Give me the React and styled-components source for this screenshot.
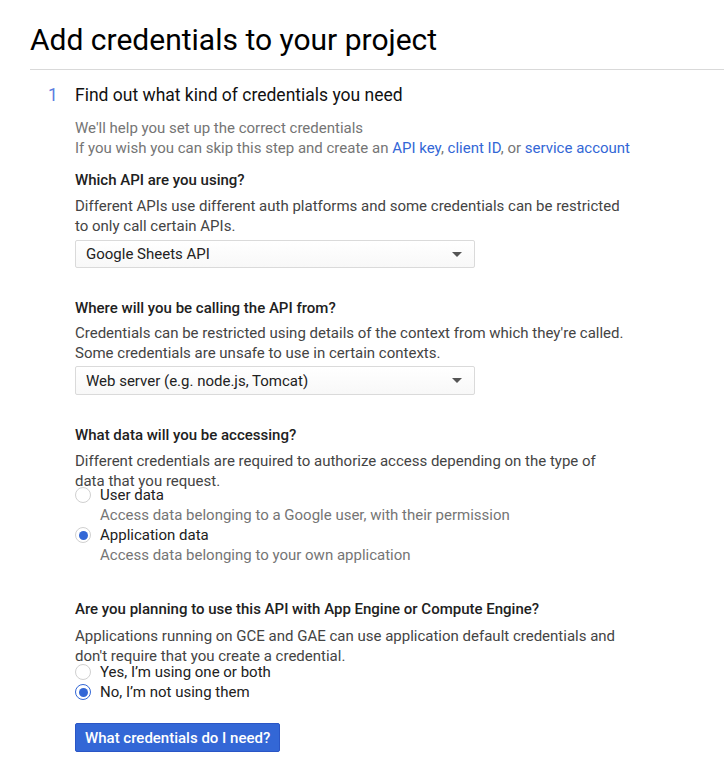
import { styled, createGlobalStyle } from "styled-components";

const GlobalStyle = createGlobalStyle`
    body{
        margin:0;
        background:#fff;
        font-family:Roboto, "Liberation Sans", Arial, sans-serif;
        color:#212121;
    }
`

const Page = styled.div`
    padding-left:30px;
    padding-top:22px;
`
const Title = styled.h1`
    margin:0;
    font-size:30px;
    line-height:36px;
    font-weight:400;
    color:#000;
`
const Divider = styled.hr`
    margin:11px 0 0 0;
    border:none;
    border-top:1px solid #d9d9d9;
`
const Step = styled.div`
    display:flex;
    margin-top:13px;
`
const StepNumber = styled.div`
    width:45px;
    padding-left:18px;
    box-sizing:border-box;
    font-size:17.5px;
    line-height:24px;
    color:#5a7de0;
`
const StepBody = styled.div`
    display:flex;
    flex-direction:column;
    width:600px;
`
const StepTitle = styled.h2`
    margin:0;
    font-size:17.5px;
    line-height:24px;
    font-weight:400;
    color:#111;
`
const Intro = styled.p`
    margin:11px 0 0 0;
    font-size:15px;
    line-height:20px;
    color:#757575;
`
const Link = styled.a`
    color:#3367d6;
    text-decoration:none;
`
const Question = styled.h3`
    margin:${p => p.$gap}px 0 0 0;
    font-size:15px;
    line-height:20px;
    font-weight:500;
    color:#212121;
`
const Description = styled.p`
    margin:${p => p.$gap ?? 6}px 0 0 0;
    font-size:15px;
    line-height:20px;
    color:#444;
`
const SelectBox = styled.div`
    display:flex;
    align-items:center;
    justify-content:space-between;
    width:400px;
    height:${p => p.$h}px;
    margin-top:${p => p.$gap}px;
    padding:0 12px 0 10px;
    box-sizing:border-box;
    border:1px solid #dadada;
    border-radius:2px;
    background:linear-gradient(#fff, #f8f8f8);
    font-size:15px;
    color:#222;
`
const Arrow = styled.span`
    width:0;
    height:0;
    border-left:5px solid transparent;
    border-right:5px solid transparent;
    border-top:5px solid #555;
`
const RadioGroup = styled.div`
    display:flex;
    flex-direction:column;
    margin-top:${p => p.$gap}px;
`
const RadioRow = styled.label`
    display:flex;
    align-items:center;
    gap:9px;
    font-size:15px;
    line-height:20px;
    color:#212121;
`
const Circle = styled.span`
    width:16px;
    height:16px;
    box-sizing:border-box;
    border-radius:50%;
    border:1px solid ${p => p.$focus ? "#3367d6" : "#d0d0d0"};
    background:#fff;
    display:flex;
    align-items:center;
    justify-content:center;
    &::after{
        content:"";
        display:${p => p.$checked ? "block" : "none"};
        width:9px;
        height:9px;
        border-radius:50%;
        background:#3367d6;
    }
`
const RadioHint = styled.div`
    padding-left:25px;
    font-size:15px;
    line-height:20px;
    color:#757575;
`
const Button = styled.button`
    align-self:flex-start;
    margin-top:21px;
    height:29px;
    padding:0 9px;
    border:1px solid #2a56c6;
    border-radius:2px;
    background:#3367d6;
    color:#fff;
    font-family:inherit;
    font-size:15px;
    font-weight:500;
`

const Radio = ({ label, hint, checked, focus }) => (
    <>
        <RadioRow>
            <Circle $checked={checked} $focus={focus} />
            {label}
        </RadioRow>
        {hint && <RadioHint>{hint}</RadioHint>}
    </>
)

const App = () => {
    return (
        <Page>
            <GlobalStyle />
            <Title>Add credentials to your project</Title>
            <Divider />
            <Step>
                <StepNumber>1</StepNumber>
                <StepBody>
                    <StepTitle>Find out what kind of credentials you need</StepTitle>
                    <Intro>
                        We'll help you set up the correct credentials<br />
                        If you wish you can skip this step and create an <Link href="#">API key</Link>, <Link href="#">client ID</Link>, or <Link href="#">service account</Link>
                    </Intro>

                    <Question $gap={12}>Which API are you using?</Question>
                    <Description>Different APIs use different auth platforms and some credentials can be restricted<br />to only call certain APIs.</Description>
                    <SelectBox $gap={4} $h={28}>Google Sheets API<Arrow /></SelectBox>

                    <Question $gap={30}>Where will you be calling the API from?</Question>
                    <Description $gap={5}>Credentials can be restricted using details of the context from which they're called.<br />Some credentials are unsafe to use in certain contexts.</Description>
                    <SelectBox $gap={3} $h={29}>Web server (e.g. node.js, Tomcat)<Arrow /></SelectBox>

                    <Question $gap={30}>What data will you be accessing?</Question>
                    <Description>Different credentials are required to authorize access depending on the type of<br />data that you request.</Description>
                    <RadioGroup $gap={-6}>
                        <Radio label="User data" hint="Access data belonging to a Google user, with their permission" />
                        <Radio label="Application data" hint="Access data belonging to your own application" checked />
                    </RadioGroup>

                    <Question $gap={34}>Are you planning to use this API with App Engine or Compute Engine?</Question>
                    <Description $gap={7}>Applications running on GCE and GAE can use application default credentials and<br />don't require that you create a credential.</Description>
                    <RadioGroup $gap={-4}>
                        <Radio label="Yes, I’m using one or both" />
                        <Radio label="No, I’m not using them" checked focus />
                    </RadioGroup>

                    <Button>What credentials do I need?</Button>
                </StepBody>
            </Step>
        </Page>
    )
}

export default App
